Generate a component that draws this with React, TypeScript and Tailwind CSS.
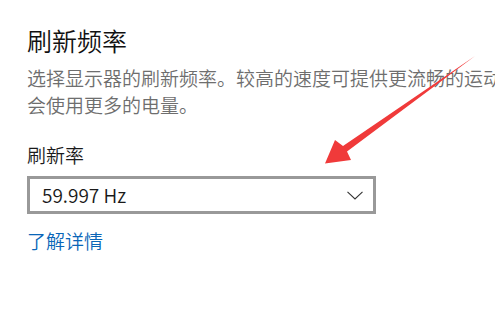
import React from "react";

export default function App() {
  const cjk = { fontFamily: '"Noto Sans CJK SC", "Noto Sans", sans-serif' };
  return (
    <div className="relative w-[495px] h-[311px] bg-white overflow-hidden" style={cjk}>
      <div className="flex flex-col pl-[27px] pt-[23px]">
        <div className="text-[25px] leading-[34px] text-[#111] font-[350]">刷新频率</div>
        <div className="mt-[7px] text-[19px] leading-[27px] text-[#6e6e6e] font-[350] whitespace-nowrap">
          <div>选择显示器的刷新频率。较高的速度可提供更流畅的运动，但也</div>
          <div>会使用更多的电量。</div>
        </div>
        <div className="mt-[23px] text-[19px] leading-[27px] text-[#1a1a1a] font-[350]">刷新率</div>
        <div className="mt-[8px] w-[349px] h-[38px] border-[3px] border-[#999999] bg-white flex items-center justify-between pl-[12px] pr-[10px]">
          <span className="text-[19px] text-[#1a1a1a] font-[350]">59.997 Hz</span>
          <svg width="16" height="9" viewBox="0 0 16 9">
            <path d="M0.5 0.8 L8 8 L15.5 0.8" fill="none" stroke="#333" strokeWidth="1.1" />
          </svg>
        </div>
        <div className="mt-[13px] text-[19px] leading-[27px] text-[#0a66b8] font-[350]">了解详情</div>
      </div>
      <svg className="absolute left-0 top-0" width="495" height="311" viewBox="0 0 495 311">
        <polygon
          points="475,56 347,151.5 351,160 325,163.5 335,140 343,146"
          fill="#f03a3a"
        />
      </svg>
    </div>
  );
}
